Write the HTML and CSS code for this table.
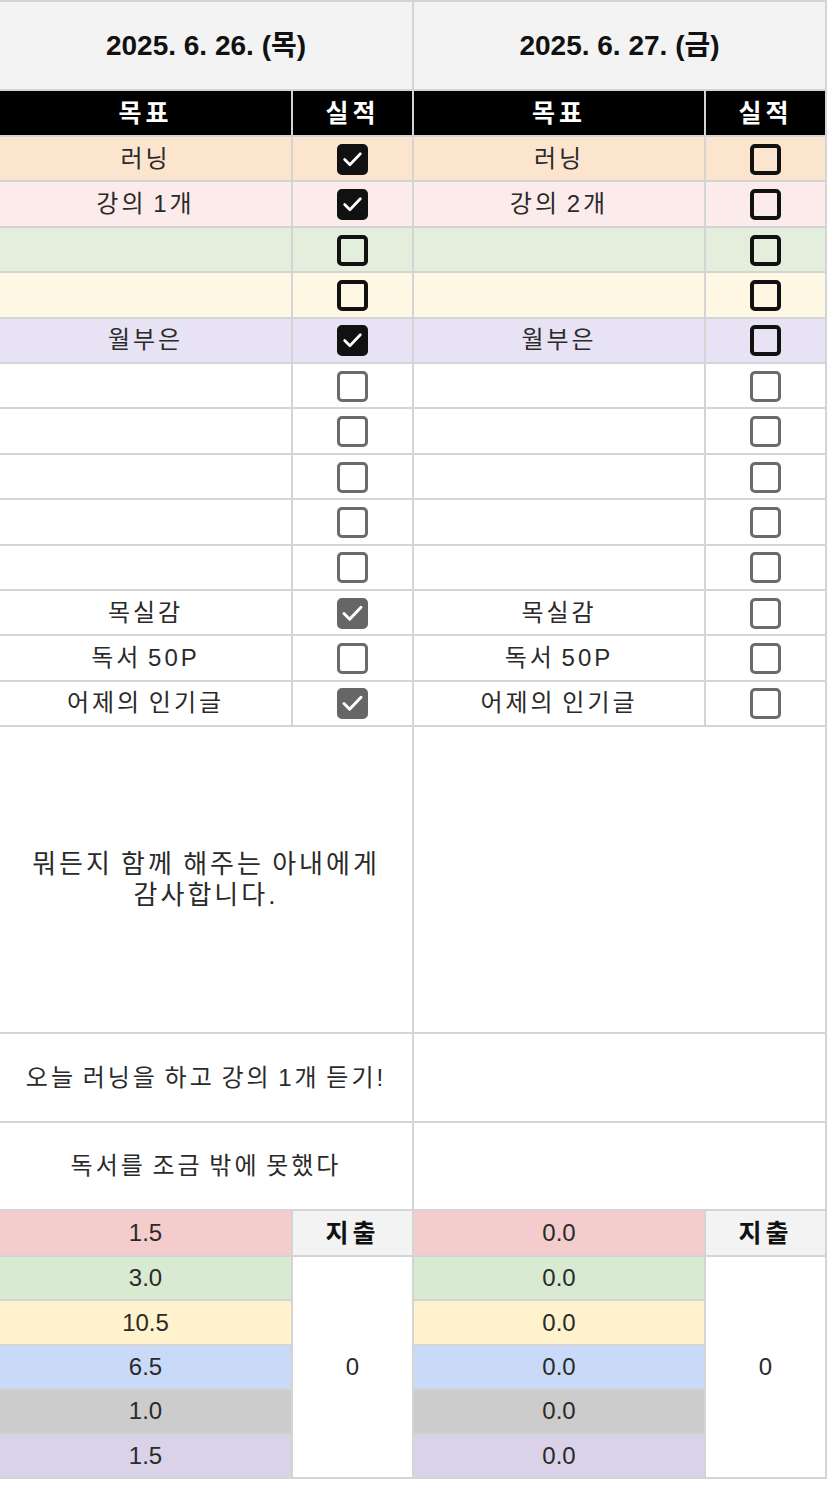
FILE: index.html
```html
<!DOCTYPE html>
<html>

<head>
    <link rel="stylesheet" href="styles.css">
</head>

<body>

    <table class="sheet">
        <colgroup>
            <col class="col-goal">
            <col class="col-check">
            <col class="col-goal">
            <col class="col-check">
        </colgroup>

        <tr class="date-row">
            <td colspan="2">2025. 6. 26. (목)</td>
            <td colspan="2">2025. 6. 27. (금)</td>
        </tr>

        <tr class="head-row">
            <td>목표</td>
            <td>실적</td>
            <td>목표</td>
            <td>실적</td>
        </tr>

        <tr class="task bg-peach">
            <td>러닝</td>
            <td><span class="cb on"></span></td>
            <td>러닝</td>
            <td><span class="cb"></span></td>
        </tr>
        <tr class="task bg-pink">
            <td>강의 1개</td>
            <td><span class="cb on"></span></td>
            <td>강의 2개</td>
            <td><span class="cb"></span></td>
        </tr>
        <tr class="task bg-green">
            <td></td>
            <td><span class="cb"></span></td>
            <td></td>
            <td><span class="cb"></span></td>
        </tr>
        <tr class="task bg-yellow">
            <td></td>
            <td><span class="cb"></span></td>
            <td></td>
            <td><span class="cb"></span></td>
        </tr>
        <tr class="task bg-purple">
            <td>월부은</td>
            <td><span class="cb on"></span></td>
            <td>월부은</td>
            <td><span class="cb"></span></td>
        </tr>

        <tr class="task">
            <td></td>
            <td><span class="cb light"></span></td>
            <td></td>
            <td><span class="cb light"></span></td>
        </tr>
        <tr class="task">
            <td></td>
            <td><span class="cb light"></span></td>
            <td></td>
            <td><span class="cb light"></span></td>
        </tr>
        <tr class="task">
            <td></td>
            <td><span class="cb light"></span></td>
            <td></td>
            <td><span class="cb light"></span></td>
        </tr>
        <tr class="task">
            <td></td>
            <td><span class="cb light"></span></td>
            <td></td>
            <td><span class="cb light"></span></td>
        </tr>
        <tr class="task">
            <td></td>
            <td><span class="cb light"></span></td>
            <td></td>
            <td><span class="cb light"></span></td>
        </tr>

        <tr class="task">
            <td>목실감</td>
            <td><span class="cb light on"></span></td>
            <td>목실감</td>
            <td><span class="cb light"></span></td>
        </tr>
        <tr class="task">
            <td>독서 50P</td>
            <td><span class="cb light"></span></td>
            <td>독서 50P</td>
            <td><span class="cb light"></span></td>
        </tr>
        <tr class="task">
            <td>어제의 인기글</td>
            <td><span class="cb light on"></span></td>
            <td>어제의 인기글</td>
            <td><span class="cb light"></span></td>
        </tr>

        <tr class="note note-big">
            <td colspan="2">뭐든지 함께 해주는 아내에게 감사합니다.</td>
            <td colspan="2"></td>
        </tr>
        <tr class="note">
            <td colspan="2">오늘 러닝을 하고 강의 1개 듣기!</td>
            <td colspan="2"></td>
        </tr>
        <tr class="note note-low">
            <td colspan="2">독서를 조금 밖에 못했다</td>
            <td colspan="2"></td>
        </tr>

        <tr class="sum sum-first">
            <td class="bg-red">1.5</td>
            <td class="spend-head">지출</td>
            <td class="bg-red">0.0</td>
            <td class="spend-head">지출</td>
        </tr>
        <tr class="sum">
            <td class="bg-mint">3.0</td>
            <td class="spend" rowspan="5">0</td>
            <td class="bg-mint">0.0</td>
            <td class="spend" rowspan="5">0</td>
        </tr>
        <tr class="sum">
            <td class="bg-sand">10.5</td>
            <td class="bg-sand">0.0</td>
        </tr>
        <tr class="sum">
            <td class="bg-blue">6.5</td>
            <td class="bg-blue">0.0</td>
        </tr>
        <tr class="sum">
            <td class="bg-gray">1.0</td>
            <td class="bg-gray">0.0</td>
        </tr>
        <tr class="sum">
            <td class="bg-lilac">1.5</td>
            <td class="bg-lilac">0.0</td>
        </tr>
    </table>

    <script>
        // draw the tick inside every checked box
        const tick = '<svg viewBox="0 0 22 22"><polyline points="3.5,11 8.5,16 18.5,5.5" /></svg>';
        document.querySelectorAll(".cb.on").forEach(box => {
            box.innerHTML = tick;
        });
    </script>

</body>

</html>
```

FILE: styles.css
```css
body {
    margin: 0;
    background-color: #fff;
    font-family: "Liberation Sans", "Noto Sans CJK KR", sans-serif;
    color: #2a2a2a;
}

.sheet {
    width: 827px;
    table-layout: fixed;
    border-collapse: collapse;
    font-size: 24px;
}

.col-goal {
    width: 292px;
}

.col-check {
    width: 121px;
}

.sheet td {
    border: 2px solid #d4d4d4;
    padding: 0 4px;
    text-align: center;
    vertical-align: middle;
    letter-spacing: 3px;
    word-spacing: -3px;
    word-break: keep-all;
    line-height: 30px;
}

.sheet tr td:first-child {
    border-left: none;
}

.date-row td {
    height: 87px;
    background-color: #f3f3f3;
    color: #111;
    font-size: 28px;
    font-weight: bold;
    letter-spacing: 0;
    word-spacing: 0;
}

.head-row td {
    height: 44px;
    background-color: #000;
    color: #fff;
    font-size: 25px;
    font-weight: bold;
    letter-spacing: 4px;
}

.task td {
    height: 43.4px;
}

.note td {
    height: 87px;
}

.note-low td {
    height: 86px;
}

.note-big td {
    height: 305px;
    font-size: 26px;
    line-height: 31px;
    word-spacing: -2px;
}

.sum td {
    height: 42.4px;
    letter-spacing: 0;
    word-spacing: 0;
}

.sum-first td {
    height: 44px;
}

.sum td.spend-head {
    background-color: #f3f3f3;
    font-size: 25px;
    font-weight: bold;
    color: #111;
    letter-spacing: 4px;
}

.spend {
    background-color: #fff;
}

/* row colours */
.bg-peach td { background-color: #fce5cf; }
.bg-pink td { background-color: #fcebeb; }
.bg-green td { background-color: #e3efdc; }
.bg-yellow td { background-color: #fef7e3; }
.bg-purple td { background-color: #e7e2f4; }

.bg-red { background-color: #f4cccc; }
.bg-mint { background-color: #d9ead3; }
.bg-sand { background-color: #fff2cc; }
.bg-blue { background-color: #c9daf8; }
.bg-gray { background-color: #cccccc; }
.bg-lilac { background-color: #d9d2e9; }

/* checkboxes */
.cb {
    display: inline-block;
    box-sizing: border-box;
    width: 31px;
    height: 31px;
    border: 4px solid #111;
    border-radius: 5px;
    vertical-align: middle;
}

.cb.light {
    border: 3px solid #6b6b6b;
}

.cb.on {
    background-color: #111;
}

.cb.light.on {
    background-color: #666;
    border-color: #666;
}

.cb svg {
    display: block;
    width: 100%;
    height: 100%;
}

.cb polyline {
    fill: none;
    stroke: #fff;
    stroke-width: 2.6;
    stroke-linecap: round;
    stroke-linejoin: round;
}
```
